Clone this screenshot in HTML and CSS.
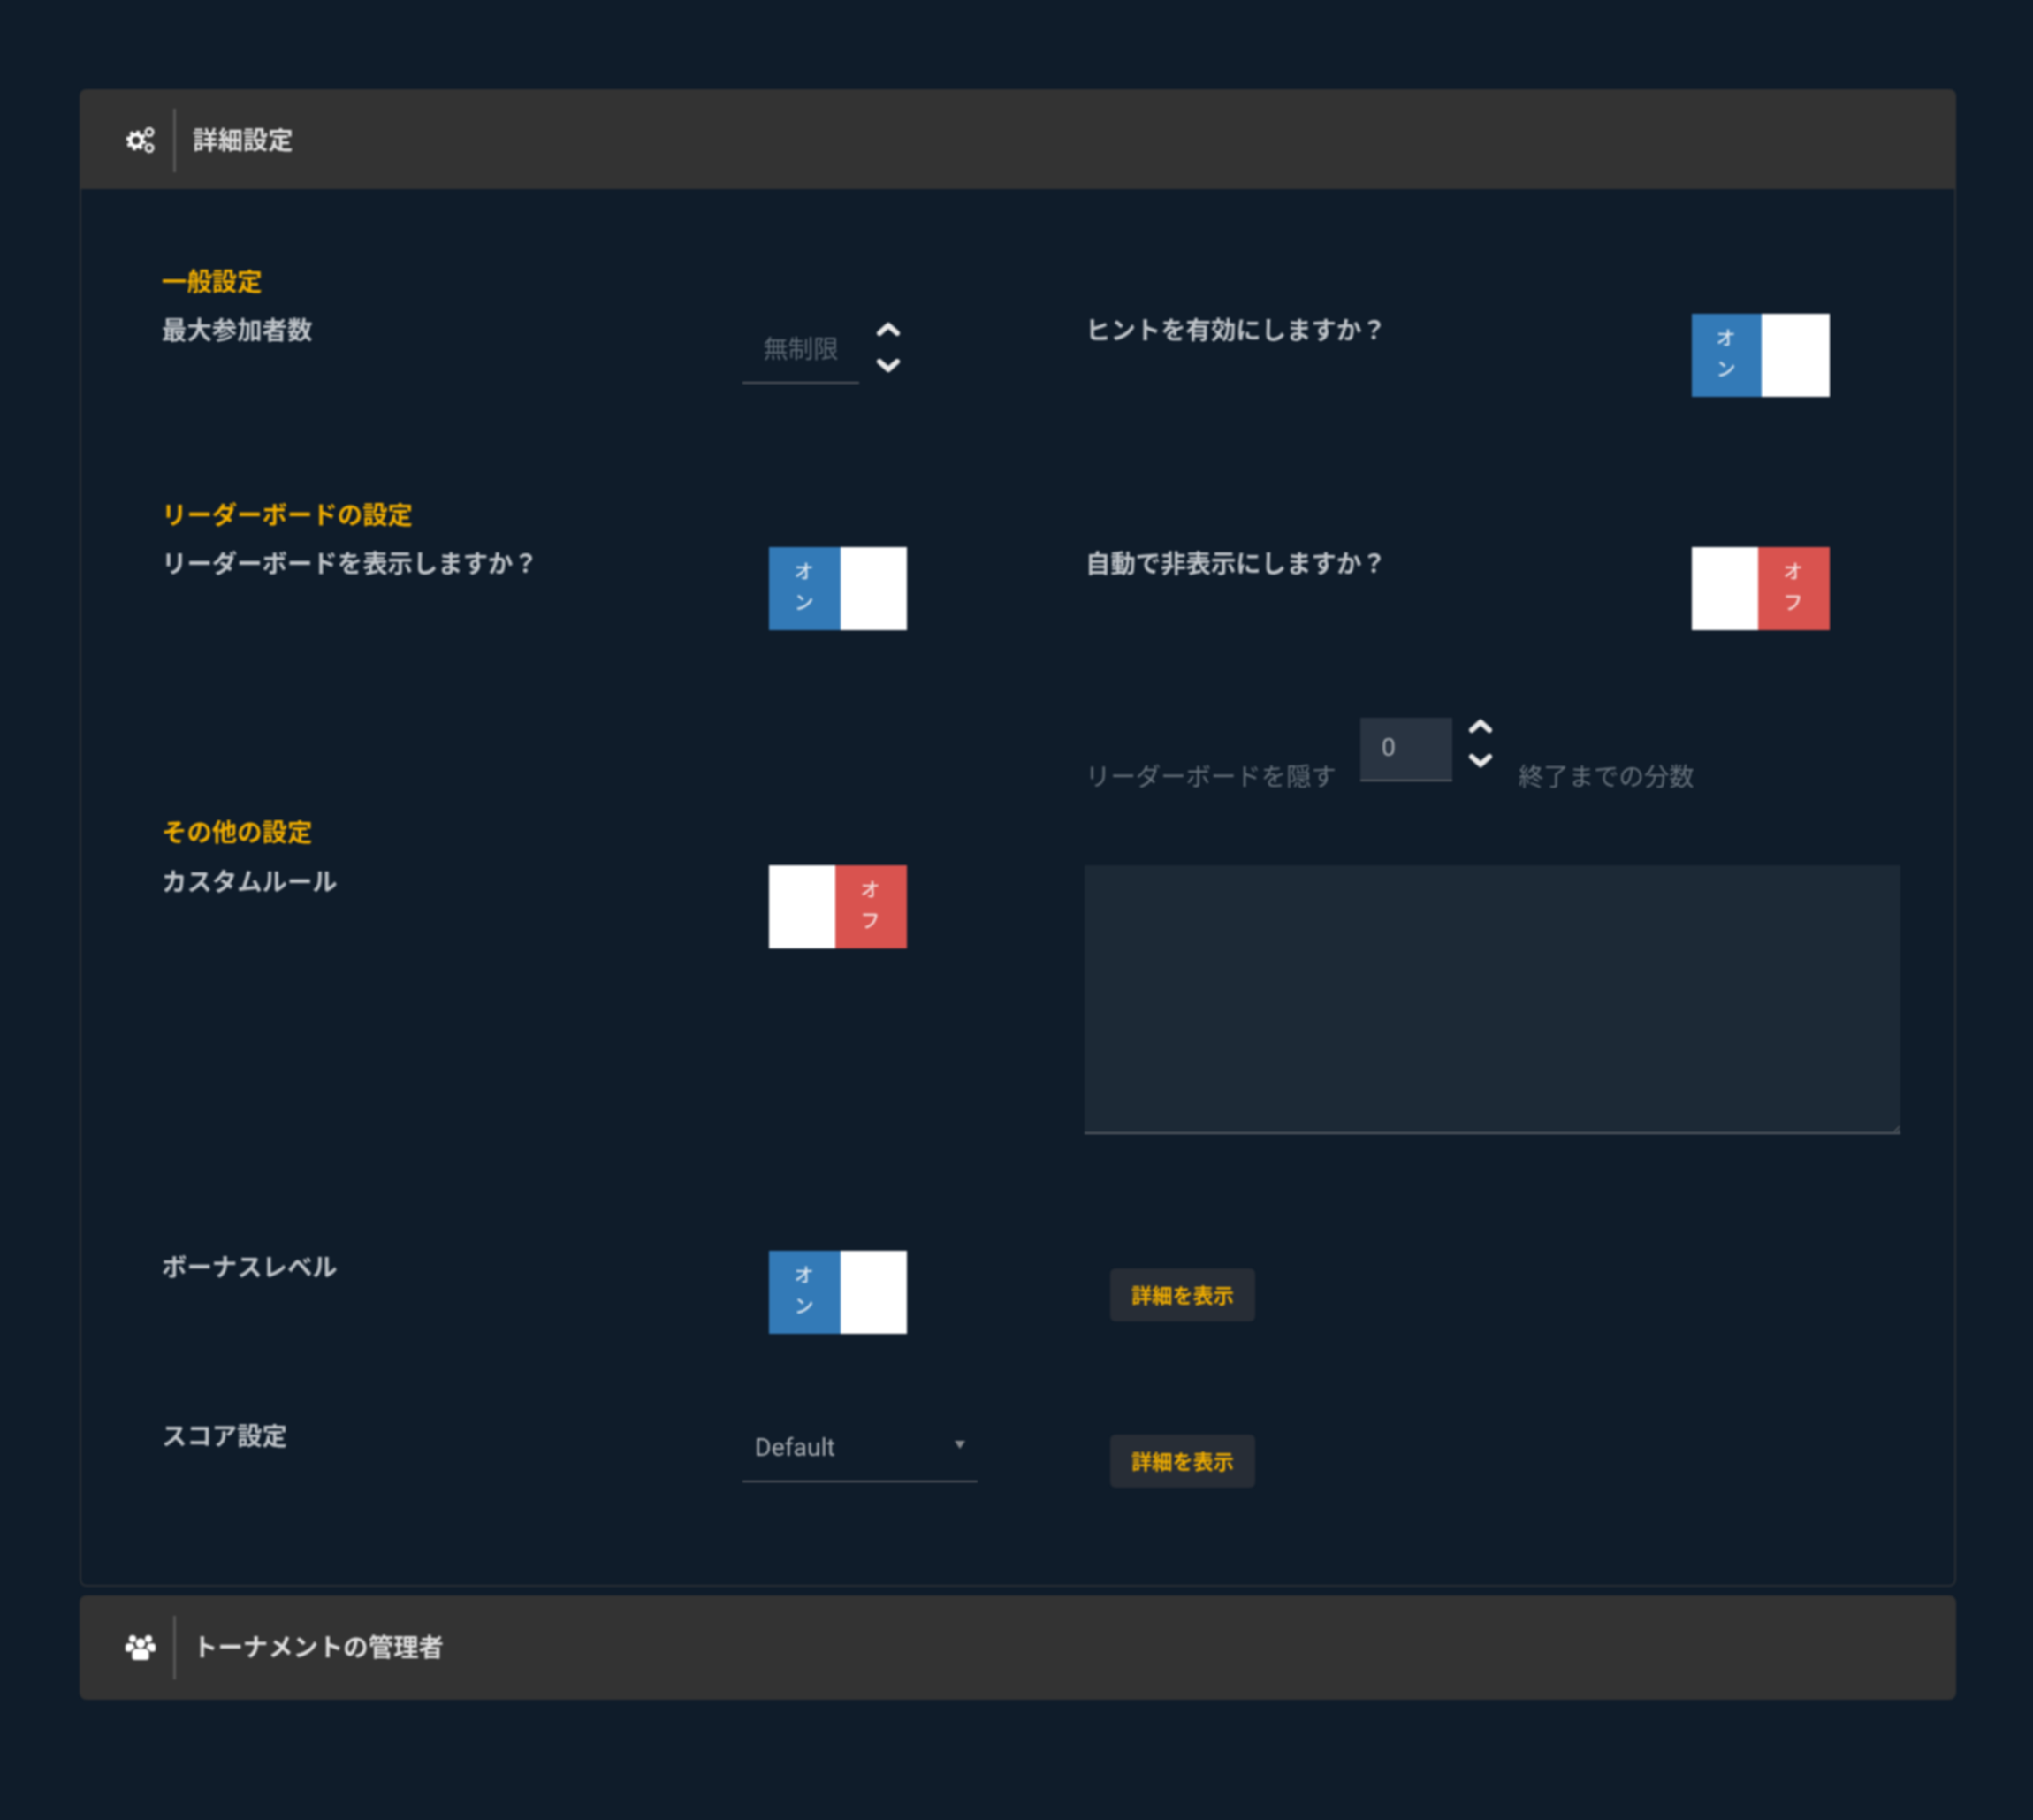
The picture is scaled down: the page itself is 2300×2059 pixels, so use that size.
FILE: index.html
```html
<!DOCTYPE html>
<html lang="ja">
<head>
<meta charset="utf-8">
<title>詳細設定</title>
<link rel="stylesheet" href="styles.css">
</head>
<body>
<main class="page">
  <section class="panel">
    <header class="panel-head">
      <svg class="head-icon" viewBox="0 0 34 31" aria-hidden="true">
        <circle cx="12" cy="16" r="6.6" fill="none" stroke="#fff" stroke-width="4.2"/>
        <circle cx="12" cy="16" r="9.8" fill="none" stroke="#fff" stroke-width="3" stroke-dasharray="4 3.7"/>
        <circle cx="27" cy="6.5" r="3.9" fill="none" stroke="#f2f2f2" stroke-width="2.5"/>
        <circle cx="27" cy="6.5" r="5.5" fill="none" stroke="#f2f2f2" stroke-width="1" stroke-dasharray="2 2.3"/>
        <circle cx="27" cy="24.5" r="3.9" fill="none" stroke="#f2f2f2" stroke-width="2.5"/>
        <circle cx="27" cy="24.5" r="5.5" fill="none" stroke="#f2f2f2" stroke-width="1" stroke-dasharray="2 2.3"/>
      </svg>
      <span class="head-divider"></span>
      <h2 class="panel-title">詳細設定</h2>
    </header>
    <div class="panel-body">
      <h3 class="group-title">一般設定</h3>
      <div class="settings-row row-general">
        <div class="setting">
          <label class="setting-label">最大参加者数</label>
          <div class="stepper stepper-limit">
            <input class="number-input" type="text" placeholder="無制限">
            <span class="chevrons">
              <svg class="chevron" viewBox="0 0 26 16"><path d="M3 13 13 4l10 9"/></svg>
              <svg class="chevron" viewBox="0 0 26 16"><path d="M3 3l10 9 10-9"/></svg>
            </span>
          </div>
        </div>
        <div class="setting setting-right">
          <label class="setting-label">ヒントを有効にしますか？</label>
          <div class="toggle"><span class="toggle-on">オン</span><span class="toggle-blank"></span></div>
        </div>
      </div>

      <h3 class="group-title">リーダーボードの設定</h3>
      <div class="settings-row row-board">
        <div class="setting">
          <label class="setting-label">リーダーボードを表示しますか？</label>
          <div class="toggle toggle-offset"><span class="toggle-on">オン</span><span class="toggle-blank"></span></div>
        </div>
        <div class="setting setting-right">
          <label class="setting-label">自動で非表示にしますか？</label>
          <div class="toggle"><span class="toggle-blank-off"></span><span class="toggle-off">オフ</span></div>
        </div>
      </div>
      <div class="hide-row">
        <span class="dim-label">リーダーボードを隠す</span>
        <div class="stepper stepper-hide">
          <input class="number-input number-filled" type="text" value="0">
          <span class="chevrons">
            <svg class="chevron" viewBox="0 0 26 16"><path d="M3 13 13 4l10 9"/></svg>
            <svg class="chevron" viewBox="0 0 26 16"><path d="M3 3l10 9 10-9"/></svg>
          </span>
        </div>
        <span class="dim-label">終了までの分数</span>
      </div>

      <h3 class="group-title">その他の設定</h3>
      <div class="settings-row row-rules">
        <div class="setting">
          <label class="setting-label">カスタムルール</label>
          <div class="toggle toggle-offset"><span class="toggle-blank-off"></span><span class="toggle-off">オフ</span></div>
        </div>
        <textarea class="rules-text"></textarea>
      </div>

      <div class="settings-row row-bonus">
        <div class="setting">
          <label class="setting-label">ボーナスレベル</label>
          <div class="toggle toggle-offset"><span class="toggle-on">オン</span><span class="toggle-blank"></span></div>
        </div>
        <button class="detail-btn" type="button">詳細を表示</button>
      </div>

      <div class="settings-row row-score">
        <div class="setting">
          <label class="setting-label">スコア設定</label>
          <div class="select-box">
            <span>Default</span>
            <span class="caret"></span>
          </div>
        </div>
        <button class="detail-btn btn-score" type="button">詳細を表示</button>
      </div>
    </div>
  </section>

  <header class="panel-head panel-collapsed">
    <svg class="head-icon icon-users" viewBox="0 0 34 31" aria-hidden="true">
      <circle cx="8" cy="6" r="4" fill="#fff"/>
      <circle cx="26" cy="6" r="4" fill="#fff"/>
      <circle cx="17" cy="11" r="5.4" fill="#fff"/>
      <path d="M0 14.500c0-2 1.500-3.200 3-3.200h5.500c.3 2 1.300 3.500 2.600 4.600-2.600.8-4.300 2.400-5 4.600H2c-1.200 0-2-.8-2-2zM34 14.500c0-2-1.500-3.200-3-3.200h-5.500c-.3 2-1.300 3.500-2.600 4.600 2.600.8 4.300 2.400 5 4.600H32c1.200 0 2-.8 2-2z" fill="#fff"/>
      <path d="M7.500 22c0-3 2.200-4.700 5-4.700h9c2.800 0 5 1.700 5 4.700v5.500c0 1.500-1 2.500-3 2.500h-13c-2 0-3-1-3-2.500z" fill="#fff"/>
    </svg>
    <span class="head-divider"></span>
    <h2 class="panel-title">トーナメントの管理者</h2>
  </header>
</main>
</body>
</html>
```
FILE: styles.css
```css
* { box-sizing: border-box; }

html, body {
  margin: 0;
  background: #0f1c2a;
}

body {
  font-family: Roboto, "Noto Sans CJK JP", sans-serif;
  font-size: 28.4px;
  line-height: 34px;
  color: #bfc4c9;
}

.page {
  width: 2300px;
  height: 2059px;
  padding: 101px 87px 0 90px;
  filter: blur(1px);
}

.panel {
  height: 1694px;
  border: 2px solid #2b3036;
  border-top: 0;
  border-radius: 8px;
}

.panel-head {
  display: flex;
  align-items: center;
  height: 113px;
  margin: 0 -2px;
  padding: 2px 0 0 52px;
  background: #333333;
  border-radius: 8px 8px 0 0;
}

.panel-collapsed {
  height: 118px;
  margin: 10px 0 0;
  padding-top: 0;
  border-radius: 8px;
}

.head-icon {
  width: 34px;
  height: 31px;
  flex: none;
}

.icon-users { margin-top: -2px; }

.head-divider {
  width: 3px;
  height: 72px;
  margin: 0 19px 0 20px;
  background: #575757;
}

.panel-title {
  margin: 0;
  padding-top: 2px;
  font-size: 28.4px;
  font-weight: 700;
  color: #dedede;
}

.panel-body {
  padding: 89px 0 0 91px;
}

.group-title {
  margin: 0 0 18px;
  font-size: 28.4px;
  font-weight: 700;
  line-height: 34px;
  color: #f0ad00;
}

.settings-row {
  display: grid;
  grid-template-columns: 1044px 923px;
  align-items: start;
  margin-bottom: 118px;
}

.row-board { margin-bottom: 0; }
.row-rules { margin: 19px 0 132px; }
.row-bonus { margin-bottom: 97px; }
.row-score { margin-bottom: 0; }

.setting {
  display: flex;
  align-items: flex-start;
  font-weight: 700;
}

.setting-label {
  width: 657px;
  flex: none;
  padding-top: 3px;
}

.setting-right .setting-label {
  width: 687px;
  padding-left: 1px;
}

.toggle {
  display: flex;
  width: 156px;
  height: 94px;
  flex: none;
  background: #fff;
}

.toggle-offset { margin-left: 30px; }

.toggle-on,
.toggle-off {
  display: flex;
  align-items: center;
  justify-content: center;
  padding: 0 23px 4px 21px;
  font-size: 22px;
  font-weight: 500;
  line-height: 35px;
  text-align: center;
  color: #dbe6f0;
}

.toggle-on { width: 79px; background: #337ab7; }
.toggle-off { width: 81px; background: #d9534f; color: #f7dedd; }
.toggle-blank { width: 77px; }
.toggle-blank-off { width: 75px; }
.toggle-offset .toggle-on { width: 81px; }
.toggle-offset .toggle-blank { width: 75px; }

.stepper {
  display: flex;
  align-items: flex-start;
}

.number-input {
  width: 132px;
  height: 79px;
  padding: 4px 22px 0;
  border: 0;
  border-bottom: 2px solid #555a60;
  background: transparent;
  font: inherit;
  font-weight: 400;
  color: #aab0b6;
  outline: none;
}

.stepper-limit .number-input { text-align: center; padding-left: 0; padding-right: 0; }
.number-input::placeholder { color: #5d6974; opacity: 1; }

.number-filled {
  width: 104px;
  height: 72px;
  padding: 0 24px 3px;
  background: #293442;
}

.chevrons {
  display: flex;
  flex-direction: column;
  margin-left: 20px;
  padding-top: 9px;
  gap: 26px;
}

.stepper-hide .chevrons {
  margin-left: 19px;
  padding-top: 1px;
  gap: 24px;
}

.chevron {
  display: block;
  width: 26px;
  height: 16px;
  fill: none;
  stroke: #e8e8e8;
  stroke-width: 6;
  stroke-linecap: round;
  stroke-linejoin: round;
}

.hide-row {
  display: flex;
  align-items: flex-end;
  width: 900px;
  margin: 99px 0 42px 1045px;
}

.dim-label {
  margin-bottom: -13px;
  color: #68737d;
  font-weight: 400;
}

.stepper-hide { margin: 0 30px 0 27px; }

.rules-text {
  display: block;
  width: 923px;
  height: 304px;
  padding: 10px 20px;
  border: 0;
  border-bottom: 2px solid #5a6067;
  border-radius: 0;
  background: #1c2936;
  outline: none;
  resize: vertical;
}

.detail-btn {
  justify-self: start;
  width: 164px;
  height: 60px;
  margin: 20px 0 0 29px;
  padding: 0 0 3px;
  border: 0;
  border-radius: 6px;
  background: #272d36;
  font-family: inherit;
  font-size: 23.2px;
  font-weight: 700;
  color: #f0ad00;
}

.btn-score { margin-top: 17px; }

.select-box {
  position: relative;
  display: flex;
  align-items: flex-start;
  width: 266px;
  height: 71px;
  padding: 15px 0 0 14px;
  border-bottom: 2px solid #555a60;
  font-weight: 400;
  color: #a9aeb3;
}

.caret {
  position: absolute;
  top: 24px;
  right: 14px;
  border-style: solid;
  border-width: 9px 6px 0;
  border-color: #8a8d91 transparent transparent;
}
```
